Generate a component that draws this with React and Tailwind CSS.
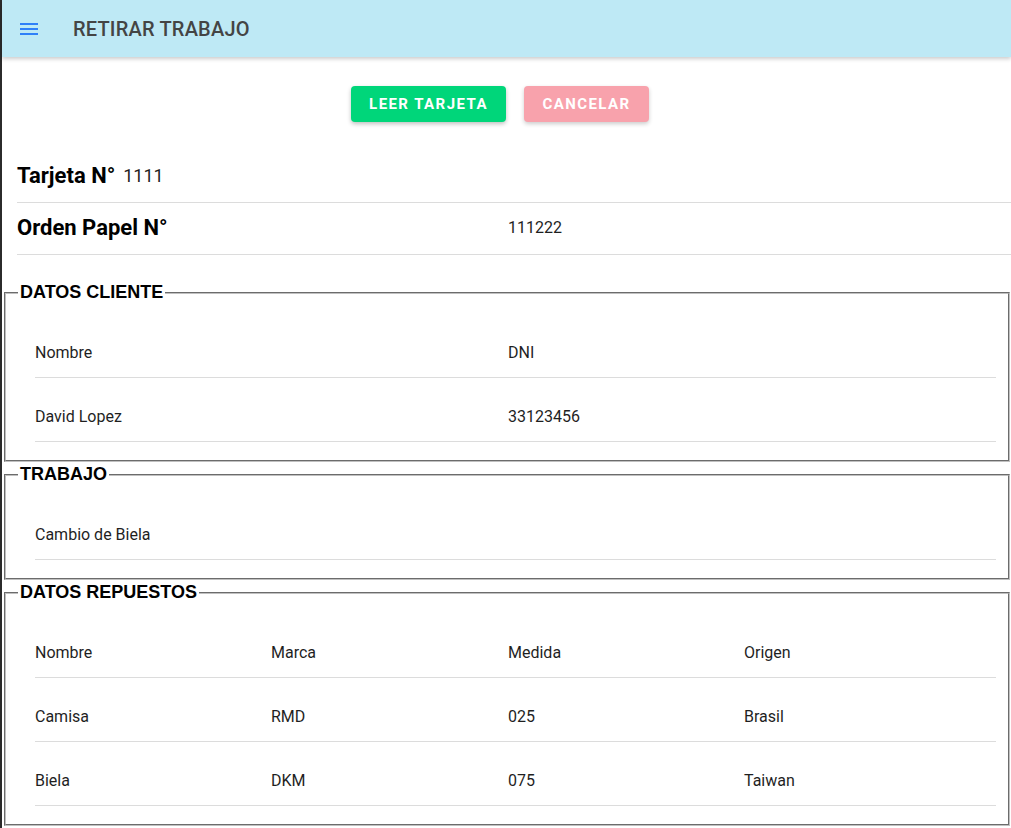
import React from "react";

const roboto = { fontFamily: "Roboto, 'Noto Sans', sans-serif" };

const cliente = [
  ["Nombre", "DNI"],
  ["David Lopez", "33123456"],
];

const repuestos = [
  ["Nombre", "Marca", "Medida", "Origen"],
  ["Camisa", "RMD", "025", "Brasil"],
  ["Biela", "DKM", "075", "Taiwan"],
];

function MenuIcon() {
  return (
    <svg width="24" height="24" viewBox="0 0 24 24" fill="#2f80f8">
      <rect x="3" y="6" width="18" height="2" />
      <rect x="3" y="11" width="18" height="2" />
      <rect x="3" y="16" width="18" height="2" />
    </svg>
  );
}

// Caja con borde y título, como un fieldset
function Seccion({ titulo, children }) {
  return (
    <fieldset className="ml-[2px] mr-[1px] mt-[2px] border-2 [border-style:groove] border-[#c0c0c0] pt-[11px] pb-[18px]">
      <legend className="ml-[12px] px-[2px] text-[18px] leading-[21px] font-bold text-black [font-family:'Liberation_Sans',Arial,sans-serif]">
        {titulo}
      </legend>
      <div className="ml-[29px] mr-[12px]">{children}</div>
    </fieldset>
  );
}

function Fila({ cols, celdas }) {
  return (
    <div
      className={`grid ${cols} border-b border-[#dcdcdc] pt-[27px] pb-[12px] text-[16px] leading-6 text-[#1f1f1f]`}
    >
      {celdas.map((c, i) => (
        <div key={i}>{c}</div>
      ))}
    </div>
  );
}

export default function App() {
  return (
    <div className="flex min-h-screen bg-white" style={roboto}>
      <div className="w-[2px] shrink-0 bg-[#2b2b2b]" />
      <div className="flex-1 min-w-0">
        {/* Barra superior */}
        <header className="h-[57px] flex items-center bg-[#bee9f5] shadow-[0_2px_4px_rgba(0,0,0,0.2)] relative">
          <div className="ml-[15px] flex items-center">
            <MenuIcon />
          </div>
          <h1 className="ml-[32px] text-[20px] font-medium text-[#444] tracking-[0.01em]">
            RETIRAR TRABAJO
          </h1>
        </header>

        {/* Botones */}
        <div className="flex justify-center gap-[18px] py-[29px] pr-[13px]">
          <button className="h-9 w-[155px] rounded bg-[#00d67a] text-white text-[15px] font-bold tracking-[0.095em] shadow-[0_2px_4px_rgba(0,0,0,0.25)]">
            LEER TARJETA
          </button>
          <button className="h-9 w-[125px] rounded bg-[#f8a2ac] text-white text-[15px] font-bold tracking-[0.095em] shadow-[0_2px_4px_rgba(0,0,0,0.2)]">
            CANCELAR
          </button>
        </div>

        {/* Tarjeta / Orden */}
        <div className="ml-[15px]">
          <div className="h-[52px] flex items-center border-b border-[#dcdcdc] pb-[2px]">
            <span className="text-[22px] font-bold text-black">Tarjeta N°</span>
            <span className="ml-[8px] text-[18px] text-[#1f1f1f]">1111</span>
          </div>
          <div className="h-[52px] flex items-center border-b border-[#dcdcdc] pb-[2px]">
            <span className="w-[491px] text-[22px] font-bold text-black">Orden Papel N°</span>
            <span className="text-[16px] text-[#1f1f1f]">111222</span>
          </div>
        </div>

        <div className="mt-[27px]">
          <Seccion titulo="DATOS CLIENTE">
            {cliente.map((f, i) => (
              <Fila key={i} cols="grid-cols-[473px_1fr]" celdas={f} />
            ))}
          </Seccion>
          <Seccion titulo="TRABAJO">
            <Fila cols="grid-cols-1" celdas={["Cambio de Biela"]} />
          </Seccion>
          <Seccion titulo="DATOS REPUESTOS">
            {repuestos.map((f, i) => (
              <Fila key={i} cols="grid-cols-[236px_237px_236px_1fr]" celdas={f} />
            ))}
          </Seccion>
        </div>
      </div>
    </div>
  );
}
